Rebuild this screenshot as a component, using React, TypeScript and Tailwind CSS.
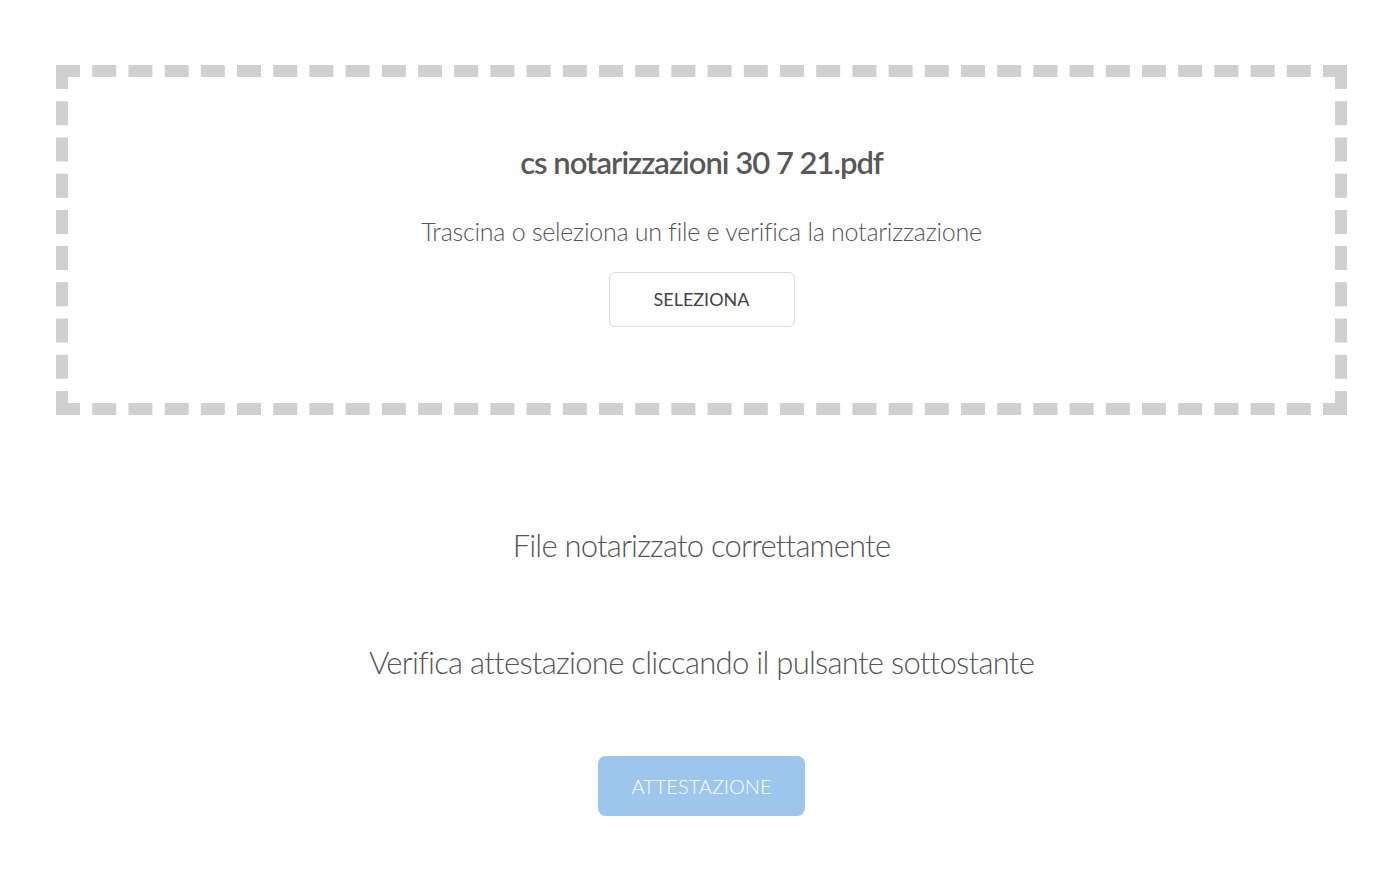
import React from 'react';

export default function App() {
  return (
    <div className="min-h-[883px] w-full bg-white pl-[3px] text-[#555555] font-['Lato','Noto_Sans',sans-serif]">
      <div className="ml-[53px] w-[1291px] pt-[65px]">
        <div className="flex h-[350px] flex-col items-center border-[12px] border-dashed border-[#d0d0d0] pt-[65px]">
          <h1 className="text-[31px] font-semibold leading-[40px] tracking-[-1px] text-[#585858]">
            cs notarizzazioni 30 7 21.pdf
          </h1>
          <p className="mt-[34px] text-[25px] font-light leading-[30px] tracking-[-0.25px] text-[#555555]">
            Trascina o seleziona un file e verifica la notarizzazione
          </p>
          <button
            type="button"
            className="mt-[26px] flex h-[55px] w-[186px] items-center justify-center rounded-[6px] border border-[#dcdcdc] bg-white text-[18px] font-normal text-[#444444]"
          >
            SELEZIONA
          </button>
        </div>
      </div>

      <div className="flex flex-col items-center">
        <p className="mt-[110px] text-[31px] font-light leading-[40px] tracking-[-0.8px] text-[#555555]">
          File notarizzato correttamente
        </p>
        <p className="mt-[77px] text-[31px] font-light leading-[40px] tracking-[-0.72px] text-[#555555]">
          Verifica attestazione cliccando il pulsante sottostante
        </p>
        <button
          type="button"
          className="mt-[74px] flex h-[60px] w-[207px] items-center justify-center rounded-[8px] bg-[#9cc6ec] text-[20px] font-light text-white"
        >
          ATTESTAZIONE
        </button>
      </div>
    </div>
  );
}
